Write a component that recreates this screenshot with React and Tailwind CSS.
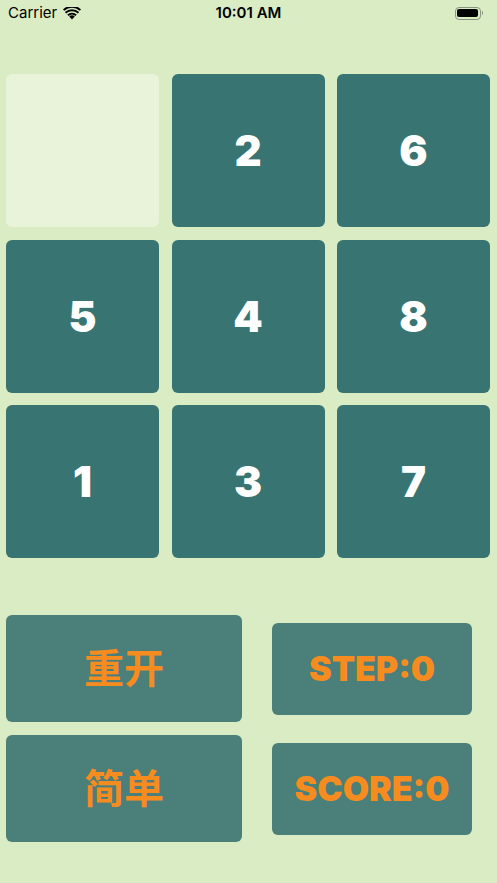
import React from 'react';

const tiles = [null, 2, 6, 5, 4, 8, 1, 3, 7];

function Wifi() {
  return (
    <svg width="18" height="13" viewBox="0 0 18 13" className="ml-[6px]">
      <path d="M9 12.6 L6.2 9.6 A4 4 0 0 1 11.8 9.6 Z" fill="#000" />
      <path d="M4.3 7.6 A6.8 6.8 0 0 1 13.7 7.6 L12.4 9 A5 5 0 0 0 5.6 9 Z" fill="#000" />
      <path d="M1.9 5.1 A10.2 10.2 0 0 1 16.1 5.1 L14.8 6.5 A8.3 8.3 0 0 0 3.2 6.5 Z" fill="#000" />
      <path d="M0 3 A13 13 0 0 1 18 3 L16.7 4.4 A11.2 11.2 0 0 0 1.3 4.4 Z" fill="#000" transform="translate(0 -0.6)" />
    </svg>
  );
}

function Battery() {
  return (
    <div className="flex items-center">
      <div className="w-[26px] h-[13px] rounded-[4px] border border-[#8a9580] p-[1.5px]">
        <div className="w-full h-full rounded-[2px] bg-black" />
      </div>
      <div className="w-[1.5px] h-[4px] rounded-r-sm bg-[#8a9580] ml-[1px]" />
    </div>
  );
}

export default function App() {
  return (
    <div className="w-[497px] h-[883px] bg-[#d9ecc3] overflow-hidden" style={{ fontFamily: 'Inter, "Noto Sans CJK SC", sans-serif' }}>
      <div className="h-[26px] relative flex items-center px-[8px]">
        <div className="flex items-center text-[15px] text-black">
          Carrier
          <Wifi />
        </div>
        <div className="absolute left-0 right-0 top-0 h-[26px] flex items-center justify-center text-[15px] font-semibold text-black">
          10:01 AM
        </div>
        <div className="ml-auto mr-[6px]">
          <Battery />
        </div>
      </div>

      <div className="mt-[48px] pl-[6px] pr-[7px] grid grid-cols-3 gap-x-[12.5px] gap-y-[12.5px]">
        {tiles.map((t, i) => (
          <div
            key={i}
            className={
              t === null
                ? 'h-[153px] rounded-[6px] bg-[#e8f3d9]'
                : 'h-[153px] rounded-[6px] bg-[#387472] flex items-center justify-center text-white text-[42px] font-black'
            }
          >
            {t}
          </div>
        ))}
      </div>

      <div className="mt-[57px] pl-[6px] grid grid-cols-[236px_200px] gap-x-[30px] gap-y-[13px] items-center">
        <div className="h-[107px] pb-[5px] rounded-[6px] bg-[#4a7f7a] flex items-center justify-center text-[#f68b1f] text-[40px] font-bold" style={{ fontFamily: '"Noto Sans CJK SC", sans-serif' }}>
          重开
        </div>
        <div className="h-[92px] rounded-[6px] bg-[#4a7f7a] flex items-center justify-center text-[#f68b1f] text-[34px] font-black">
          STEP:0
        </div>
        <div className="h-[107px] pb-[5px] rounded-[6px] bg-[#4a7f7a] flex items-center justify-center text-[#f68b1f] text-[40px] font-bold" style={{ fontFamily: '"Noto Sans CJK SC", sans-serif' }}>
          简单
        </div>
        <div className="h-[92px] rounded-[6px] bg-[#4a7f7a] flex items-center justify-center text-[#f68b1f] text-[34px] font-black">
          SCORE:0
        </div>
      </div>
    </div>
  );
}
